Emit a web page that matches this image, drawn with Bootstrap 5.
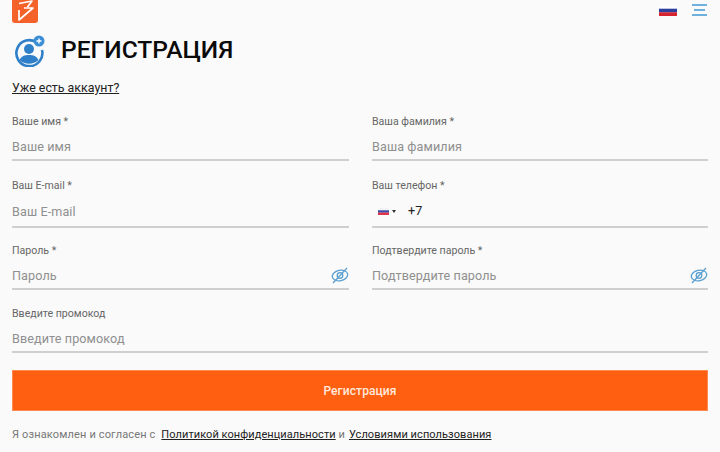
<!DOCTYPE html>
<html lang="ru">
  <head>
    <meta charset="UTF-8" />
    <title>Регистрация</title>
    <link href="https://cdn.jsdelivr.net/npm/bootstrap@5.3.2/dist/css/bootstrap.min.css" rel="stylesheet" />
    <style>
      html, body { height: 452px; overflow: hidden; }
      body {
        font-family: Roboto, "Liberation Sans", sans-serif;
        background-color: #fafafa;
        color: #111;
      }
      .reg-page { padding: 0 12px; }
      .top-bar { height: 27px; }
      .logo-box {
        width: 26px;
        height: 23px;
        background: #f4622a;
        border-radius: 0 0 3px 3px;
      }
      .menu-lines { width: 15px; margin-right: 1px; margin-left: 15px; }
      .menu-lines i { display: block; height: 2px; background: #6fb1dd; margin-bottom: 3px; }
      .menu-lines i:nth-child(2) { margin-left: 2px; margin-right: 2px; }
      .flag-top { width: 18px; height: 11px; margin-bottom: 3px; }
      .title-row { height: 47px; padding-left: 1px; }
      .reg-title { font-size: 24.6px; font-weight: 500; line-height: 1; margin: 0 0 0 16px; color: #0b0b0b; }
      .have-account { font-size: 12.4px; color: #222; line-height: 16px; margin: 6px 0 0; display: block; }
      .form-cols { column-gap: 23px; display: grid; grid-template-columns: 337px 336px; margin-top: 19px; }
      .field-box { height: 64px; }
      .row-tall { height: 65px; }
      .row-short { height: 63px; }
      .field-label { font-size: 10.6px; color: #666; line-height: 14px; margin: 0; display: block; }
      .field-input {
        height: 28px;
        margin-top: 4px;
        border-bottom: 2px solid #cfcfcf;
        display: flex;
        align-items: center;
        font-size: 13px;
      }
      .phone-input { height: 31px; }
      .field-input input {
        flex: 1;
        min-width: 0;
        border: 0;
        padding: 2px 0 0;
        background: transparent;
        font-size: 12.6px;
        letter-spacing: .1px;
        outline: 0;
        color: #222;
      }
      .field-input input.phone-value { padding-top: 0; }
      .field-input input::placeholder { color: #8f8f8f; opacity: 1; }
      .eye-icon { flex: none; margin-top: 1px; }
      .phone-flag { width: 11px; height: 7px; margin-left: 6px; }
      .flag-caret { width: 0; height: 0; border: 2px solid transparent; border-top: 3px solid #333; border-bottom: 0; margin: 0 12px 0 3px; }
      .promo-box { grid-column: 1 / 3; }
      .submit-btn {
        display: block;
        width: 100%;
        height: 41px;
        margin-top: -1px;
        background: #ff5f11;
        border: 1px solid #ff8a50;
        border-radius: 0;
        color: #ffe9dc;
        font-size: 12px;
        font-weight: 500;
        letter-spacing: .1px;
      }
      .submit-btn:hover { background: #ff5f11; color: #ffe9dc; }
      .terms-line { font-size: 11px; color: #777; line-height: 14px; margin: 17px 0 0; letter-spacing: .15px; }
      .terms-line a { color: #222; margin-left: 3px; letter-spacing: .07px; }
      .terms-line a:last-child { margin-left: 1px; letter-spacing: .08px; }
    </style>
  </head>
  <body>
    <div class="reg-page">
      <div class="top-bar d-flex justify-content-between align-items-start">
        <div class="logo-box">
          <svg class="d-block" width="26" height="23" viewBox="0 0 26 23">
            <path d="M7 3.500L20 1l-4.500 6" fill="none" stroke="#fff" stroke-width="1.700" stroke-linejoin="round" />
            <path d="M7 10v10L21 8h-9" fill="none" stroke="#fff" stroke-width="1.700" stroke-linejoin="round" />
          </svg>
        </div>
        <div class="d-flex align-items-center pt-1">
          <svg class="flag-top" viewBox="0 0 18 11">
            <rect width="18" height="4" fill="#fdfdfd" />
            <rect y="3.700" width="18" height="3.700" fill="#2b3f9e" />
            <rect y="7.300" width="18" height="3.700" fill="#d5222f" />
          </svg>
          <div class="menu-lines"><i></i><i></i><i></i></div>
        </div>
      </div>

      <div class="title-row d-flex align-items-center">
        <svg width="32" height="32" viewBox="0 0 32 32">
          <path d="M24.500 8A13 13 0 1 0 29 15" fill="none" stroke="#2f80c8" stroke-width="2.600" />
          <circle cx="16" cy="14" r="5" fill="#2f80c8" />
          <path d="M6.500 25c2-4 5-5 9.500-5s7.500 1 9.500 5c-5 5-14 5-19 0z" fill="#2f80c8" />
          <circle cx="26" cy="6" r="5.500" fill="#3c8fd4" />
          <path d="M26 3.500v5M23.500 6h5" stroke="#fff" stroke-width="1.400" />
        </svg>
        <h1 class="reg-title">РЕГИСТРАЦИЯ</h1>
      </div>

      <a href="#" class="have-account">Уже есть аккаунт?</a>

      <form class="form-cols">
        <div class="field-box">
          <label class="field-label">Ваше имя *</label>
          <div class="field-input"><input type="text" placeholder="Ваше имя" /></div>
        </div>
        <div class="field-box">
          <label class="field-label">Ваша фамилия *</label>
          <div class="field-input"><input type="text" placeholder="Ваша фамилия" /></div>
        </div>
        <div class="field-box row-tall">
          <label class="field-label">Ваш E-mail *</label>
          <div class="field-input phone-input"><input type="text" placeholder="Ваш E-mail" /></div>
        </div>
        <div class="field-box row-tall">
          <label class="field-label">Ваш телефон *</label>
          <div class="field-input phone-input">
            <svg class="phone-flag" viewBox="0 0 11 7">
              <rect width="11" height="2.400" fill="#f3f3f3" />
              <rect y="2.300" width="11" height="2.400" fill="#3a4aa8" />
              <rect y="4.600" width="11" height="2.400" fill="#e0344a" />
            </svg>
            <span class="flag-caret"></span>
            <input type="text" class="phone-value" value="+7" />
          </div>
        </div>
        <div class="field-box row-short">
          <label class="field-label">Пароль *</label>
          <div class="field-input">
            <input type="text" placeholder="Пароль" />
            <svg class="eye-icon" width="18" height="17" viewBox="0 0 18 17" fill="none" stroke="#5a9fd0" stroke-width="1.300">
              <ellipse cx="9" cy="8.500" rx="7.800" ry="5.200" transform="rotate(-12 9 8.500)" />
              <circle cx="9" cy="8.500" r="2.800" />
              <path d="M2 16L16 1" />
            </svg>
          </div>
        </div>
        <div class="field-box row-short">
          <label class="field-label">Подтвердите пароль *</label>
          <div class="field-input">
            <input type="text" placeholder="Подтвердите пароль" />
            <svg class="eye-icon" width="18" height="17" viewBox="0 0 18 17" fill="none" stroke="#5a9fd0" stroke-width="1.300">
              <ellipse cx="9" cy="8.500" rx="7.800" ry="5.200" transform="rotate(-12 9 8.500)" />
              <circle cx="9" cy="8.500" r="2.800" />
              <path d="M2 16L16 1" />
            </svg>
          </div>
        </div>
        <div class="field-box promo-box">
          <label class="field-label">Введите промокод</label>
          <div class="field-input"><input type="text" placeholder="Введите промокод" /></div>
        </div>
      </form>

      <button type="button" class="btn submit-btn">Регистрация</button>

      <p class="terms-line">Я ознакомлен и согласен с <a href="#">Политикой конфиденциальности</a> и <a href="#">Условиями использования</a></p>
    </div>

    <script src="https://cdn.jsdelivr.net/npm/bootstrap@5.3.2/dist/js/bootstrap.bundle.min.js"></script>
  </body>
</html>
